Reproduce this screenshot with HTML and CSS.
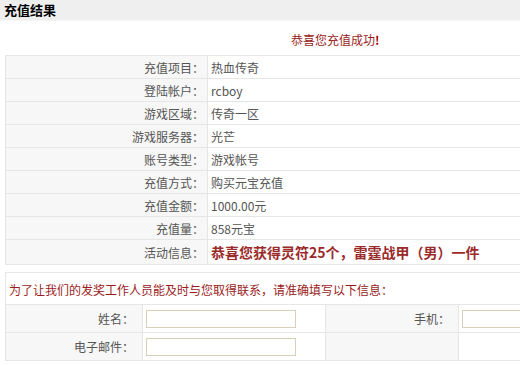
FILE: index.html
```html
<!DOCTYPE html>
<html lang="zh-CN">
<head>
    <meta charset="UTF-8">
    <title>充值结果</title>
    <link rel="stylesheet" href="styles.css">
</head>
<body>
    <div class="title-bar">充值结果</div>

    <div class="success-msg">恭喜您充值成功<b>!</b></div>

    <table class="result-table">
        <tr><th>充值项目：</th><td>热血传奇</td></tr>
        <tr><th>登陆帐户：</th><td>rcboy</td></tr>
        <tr><th>游戏区域：</th><td>传奇一区</td></tr>
        <tr><th>游戏服务器：</th><td>光芒</td></tr>
        <tr><th>账号类型：</th><td>游戏帐号</td></tr>
        <tr><th>充值方式：</th><td>购买元宝充值</td></tr>
        <tr><th>充值金额：</th><td>1000.00元</td></tr>
        <tr><th>充值量：</th><td>858元宝</td></tr>
        <tr class="activity"><th>活动信息：</th><td class="prize">恭喜您获得灵符25个，雷霆战甲（男）一件</td></tr>
    </table>

    <table class="contact-table">
        <colgroup>
            <col class="col-a">
            <col class="col-b">
            <col class="col-c">
            <col class="col-d">
        </colgroup>
        <tr><td colspan="4" class="notice">为了让我们的发奖工作人员能及时与您取得联系，请准确填写以下信息：</td></tr>
        <tr>
            <th>姓名：</th>
            <td><input type="text" class="field"></td>
            <th>手机：</th>
            <td><input type="text" class="field"></td>
        </tr>
        <tr>
            <th>电子邮件：</th>
            <td><input type="text" class="field"></td>
            <th></th>
            <td></td>
        </tr>
    </table>
</body>
</html>
```

FILE: styles.css
```css
body {
    margin: 0;
    padding: 0;
    font-family: "Noto Sans CJK SC", "Liberation Sans", sans-serif;
    font-size: 12px;
    color: #555;
    background-color: #fff;
    overflow: hidden;
}

.title-bar {
    height: 20px;
    line-height: 19px;
    padding-left: 4px;
    background-color: #efefef;
    border-bottom: 1px solid #f5f5f5;
    font-size: 13px;
    font-weight: bold;
    color: #000;
}

.success-msg {
    height: 34px;
    line-height: 38px;
    padding-left: 291px;
    color: #9b1c1c;
}

.success-msg b {
    color: #a00000;
}

table {
    border-collapse: collapse;
    margin-left: 5px;
}

th, td {
    border: 1px solid #e6e6e6;
    padding: 0;
    font-weight: normal;
}

.result-table {
    width: 560px;
}

.result-table th {
    width: 198px;
    height: 22px;
    padding-right: 3px;
    text-align: right;
    background-color: #f7f7f7;
}

.result-table td {
    padding-left: 3px;
    color: #555;
}

.result-table .activity th,
.result-table .activity td {
    height: 24px;
}

.result-table .prize {
    font-size: 14px;
    font-weight: bold;
    color: #9b2a2a;
}

.contact-table {
    width: 560px;
    table-layout: fixed;
    margin-top: 7px;
}

.col-a { width: 137px; }
.col-b { width: 183px; }
.col-c { width: 133px; }

.notice {
    height: 29px;
    padding: 2px 0 0 6px;
    color: #9b1c1c;
    background-color: #fff;
}

.contact-table th {
    height: 27px;
    padding-right: 8px;
    text-align: right;
    background-color: #f7f7f7;
}

.contact-table td {
    padding-left: 3px;
}

.field {
    display: block;
    width: 146px;
    height: 14px;
    margin: 0;
    padding: 1px;
    border: 1px solid #d6d0b8;
    background-color: #fff;
}
```
